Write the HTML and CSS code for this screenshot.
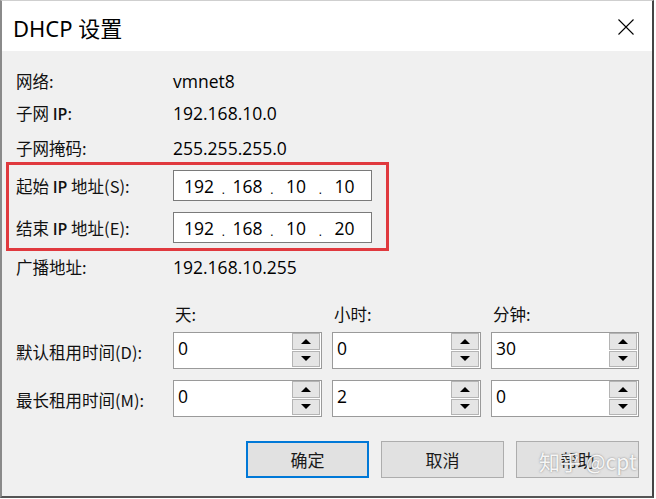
FILE: index.html
```html
<!DOCTYPE html>
<html lang="zh-CN">
<head>
<meta charset="utf-8">
<title>DHCP 设置</title>
<link rel="stylesheet" href="styles.css">
</head>
<body>
<div class="win">
  <div class="titlebar">
    <span class="title">DHCP 设置</span>
    <svg class="close" width="16" height="16" viewBox="0 0 16 16"><path d="M0.5 0.5 L15.5 15.5 M15.5 0.5 L0.5 15.5" stroke="#000" stroke-width="1.1" fill="none"/></svg>
  </div>
  <div class="content">
    <div class="info r1"><span class="lbl">网络:</span><span class="val">vmnet8</span></div>
    <div class="info r2"><span class="lbl">子网 <b>IP</b>:</span><span class="val">192.168.10.0</span></div>
    <div class="info r3"><span class="lbl">子网掩码:</span><span class="val">255.255.255.0</span></div>
    <div class="range">
      <div class="iprow"><span class="lbl">起始 <b>IP</b> 地址(S):</span>
        <div class="ipbox"><span class="seg">192</span><span class="dot">.</span><span class="seg">168</span><span class="dot">.</span><span class="seg">10</span><span class="dot">.</span><span class="seg">10</span></div>
      </div>
      <div class="iprow"><span class="lbl">结束 <b>IP</b> 地址(E):</span>
        <div class="ipbox"><span class="seg">192</span><span class="dot">.</span><span class="seg">168</span><span class="dot">.</span><span class="seg">10</span><span class="dot">.</span><span class="seg">20</span></div>
      </div>
    </div>
    <div class="info r4"><span class="lbl">广播地址:</span><span class="val">192.168.10.255</span></div>
    <div class="lease">
      <span></span><span class="hdr">天:</span><span class="hdr">小时:</span><span class="hdr">分钟:</span>
      <span class="lbl">默认租用时间(D):</span>
      <div class="spin"><span class="num">0</span><div class="arrows"><span class="btn up"></span><span class="btn down"></span></div></div>
      <div class="spin"><span class="num">0</span><div class="arrows"><span class="btn up"></span><span class="btn down"></span></div></div>
      <div class="spin"><span class="num">30</span><div class="arrows"><span class="btn up"></span><span class="btn down"></span></div></div>
      <span class="lbl">最长租用时间(M):</span>
      <div class="spin"><span class="num">0</span><div class="arrows"><span class="btn up"></span><span class="btn down"></span></div></div>
      <div class="spin"><span class="num">2</span><div class="arrows"><span class="btn up"></span><span class="btn down"></span></div></div>
      <div class="spin"><span class="num">0</span><div class="arrows"><span class="btn up"></span><span class="btn down"></span></div></div>
    </div>
    <div class="buttons">
      <button class="b default">确定</button>
      <button class="b">取消</button>
      <button class="b help">帮助<span class="wm">知乎 @cpt</span></button>
    </div>
  </div>
</div>
</body>
</html>
```
FILE: styles.css
```css
* { box-sizing: border-box; }
html, body { margin: 0; padding: 0; }
body {
  width: 656px;
  height: 499px;
  overflow: hidden;
  background: #fff;
  font-family: "Open Sans", "Noto Sans CJK SC", sans-serif;
  color: #000;
}
.win {
  width: 654px;
  height: 498px;
  border-left: 2px solid #8a8a8a;
  border-right: 2px solid #444;
  border-bottom: 2px solid #555;
  border-top: 1px solid #cfcfcf;
  background: #f0f0f0;
  display: flex;
  flex-direction: column;
}
.titlebar {
  height: 50px;
  background: #fff;
  display: flex;
  align-items: center;
  padding-left: 11px;
  padding-right: 18px;
  justify-content: space-between;
  flex: none;
}
.title {
  font-family: "Noto Sans", "Noto Sans CJK SC", sans-serif;
  font-size: 22px;
  margin-top: 2px;
}
.close { margin-top: 1px; }
.content {
  flex: 1;
  position: relative;
}
.lbl {
  font-family: "Noto Sans CJK SC", sans-serif;
  font-size: 16.5px;
  color: #111;
  white-space: nowrap;
}
.lbl b {
  font-family: "Open Sans", sans-serif;
  font-weight: 600;
  font-size: 16px;
}
.val {
  font-size: 17.5px;
}
.info {
  display: flex;
  align-items: center;
  height: 24px;
  padding-left: 14px;
}
.info .lbl { width: 157px; flex: none; }
.r1 { margin-top: 18px; }
.r2 { margin-top: 8px; }
.r3 { margin-top: 11px; }
.r4 { margin-top: 4px; }
.range {
  margin-top: 2px;
  margin-left: 4px;
  width: 383px;
  height: 89px;
  border: 3px solid #e0393e;
  padding: 5px 0 0 7px;
  display: flex;
  flex-direction: column;
  gap: 11px;
}
.iprow {
  display: flex;
  align-items: center;
  height: 31px;
}
.iprow .lbl { width: 157px; flex: none; }
.ipbox {
  width: 199px;
  height: 31px;
  border: 1px solid #7a7a7a;
  background: #fff;
  display: flex;
  align-items: center;
  padding-left: 4px;
  font-size: 17.5px;
}
.seg { width: 42px; text-align: center; }
.dot { width: 6.5px; text-align: center; font-size: 12px; padding-top: 8px; }
.lease {
  margin-top: 24px;
  padding-left: 14px;
  display: grid;
  grid-template-columns: 147px 149px 149px 148px;
  grid-template-rows: 18px 37px 37px;
  column-gap: 10px;
  row-gap: 11px;
  align-items: center;
}
.lease .hdr {
  font-family: "Noto Sans CJK SC", sans-serif;
  font-size: 16.5px;
  color: #111;
  padding-left: 2px;
  line-height: 22px;
  align-self: start;
  height: 18px;
}
.lease > .lbl { margin-top: 2px; }
.spin {
  height: 37px;
  border: 1px solid #9a9a9a;
  background: #fff;
  display: flex;
  align-items: stretch;
  justify-content: space-between;
}
.num { font-size: 17.5px; padding-left: 4px; line-height: 31px; }
.arrows {
  width: 29px;
  display: flex;
  flex-direction: column;
  gap: 1px;
  padding: 0 1px 1px 0;
}
.btn {
  flex: 1;
  background: #e5e5e5;
  border: 1px solid #b4b4b4;
  display: flex;
  align-items: center;
  justify-content: center;
}
.btn::after {
  content: "";
  width: 0;
  height: 0;
  border-left: 5px solid transparent;
  border-right: 5px solid transparent;
}
.up::after { border-bottom: 5px solid #000; }
.down::after { border-top: 5px solid #000; }
.buttons {
  display: flex;
  gap: 12px;
  margin-top: 24px;
  padding-left: 244px;
}
.b {
  width: 123px;
  height: 37px;
  background: #e1e1e1;
  border: 1px solid #adadad;
  font-family: "Noto Sans CJK SC", sans-serif;
  font-size: 17px;
  color: #1a1a1a;
  padding: 0;
  position: relative;
}
.b.default { border: 2px solid #0078d7; }
.wm {
  position: absolute;
  left: 22px;
  top: 4px;
  font-family: "Noto Sans CJK SC", sans-serif;
  font-size: 21px;
  color: rgba(255,255,255,0.92);
  text-shadow: 0 0 2px rgba(90,90,90,0.7);
  white-space: nowrap;
}
```
